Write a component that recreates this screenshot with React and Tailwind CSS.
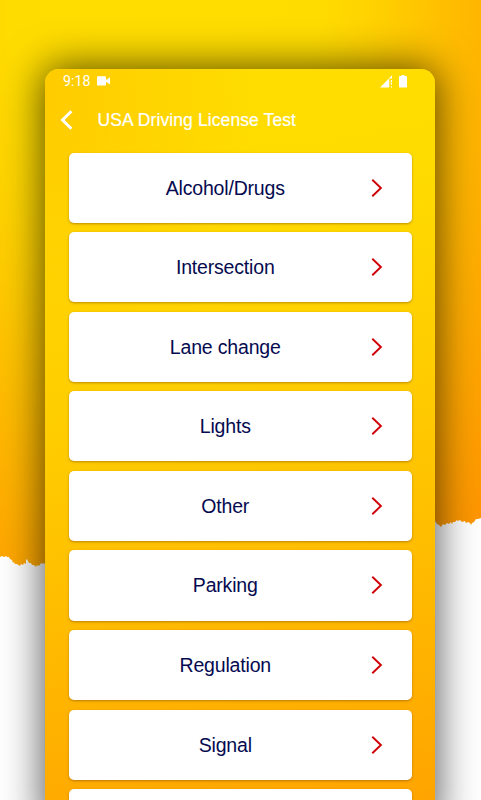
const topics = [
  'Alcohol/Drugs',
  'Intersection',
  'Lane change',
  'Lights',
  'Other',
  'Parking',
  'Regulation',
  'Signal',
  '',
];

function TornBackdrop() {
  return (
    <svg className="absolute inset-0" width="481" height="800" viewBox="0 0 481 800" aria-hidden="true">
      <defs>
        <radialGradient id="backdrop" gradientUnits="userSpaceOnUse" cx="0" cy="0" r="1" gradientTransform="translate(165 0) scale(480 790)">
          <stop offset="0" stopColor="#ffdd00" />
          <stop offset="0.32" stopColor="#ffdc00" />
          <stop offset="0.43" stopColor="#ffd200" />
          <stop offset="0.62" stopColor="#ffba00" />
          <stop offset="0.94" stopColor="#ff9400" />
          <stop offset="1" stopColor="#ff9000" />
        </radialGradient>
      </defs>
      <path
        fill="url(#backdrop)"
        d="M0 0H481V518L478 519L476 519L474 522L472 523L471 525L470 523L468 522L466 523L465 521L462 522L460 520L458 521L457 520L455 522L453 522L452 524L451 522L449 524L447 523L445 525L443 524L441 527L439 525L437 524L435 521V567H45V564L43 563L42 564L41 563L39 566L37 565L36 567L34 565L32 565L31 563L29 563L28 561L27 559L26 560V564L24 563L23 565L21 564L20 566L17 564L15 564L14 562L13 563L12 560L10 559L9 557L7 557L6 556L4 557L2 556L0 557Z"
      />
    </svg>
  );
}

function StatusBar() {
  return (
    <div className="flex h-6 items-center justify-between pl-[18px] pr-7">
      <div className="flex items-center gap-[7px]">
        <span className="font-[Roboto,sans-serif] text-[14.2px] leading-6">9:18</span>
        <svg width="14" height="10" viewBox="0 0 14 10" fill="currentColor" aria-hidden="true">
          <path d="M.7 .3h7.6q.7 0 .7.7v2.9L10.6 3l2.4-1.7v7.2L10.6 6.8 9 5.9v2.9q0 .7-.7.7H.7Q0 9.5 0 8.8V1Q0 .3.7 .3Z" />
        </svg>
      </div>
      <div className="flex items-center gap-[7px]">
        <svg width="12" height="13" viewBox="0 0 12 13" fill="currentColor" aria-hidden="true">
          <path d="M0 12.5 9.2 3.3V12.5ZM8.8 3.5 12 .2V3.5ZM10.8 5h1.2v1.9h-1.2ZM10.8 7.6h1.2v2.2h-1.2ZM10.8 11.2h1.2v1.3h-1.2Z" />
        </svg>
        <svg width="8" height="13" viewBox="0 0 8 13" fill="currentColor" aria-hidden="true">
          <path d="M2.4 0h3.2v1.1h1.6q.8 0 .8.8v9.8q0 .8-.8.8H.8q-.8 0-.8-.8V1.9q0-.8.8-.8h1.6Z" />
        </svg>
      </div>
    </div>
  );
}

function Header() {
  return (
    <header className="flex h-[54px] items-center pl-[15px]">
      <svg width="13" height="20" viewBox="0 0 13 20" fill="none" stroke="currentColor" strokeWidth="2.9" aria-hidden="true">
        <path d="M11.4 1.2 2.5 10l8.9 8.8" />
      </svg>
      <h1 className="ml-[24.5px] whitespace-nowrap text-[17.5px] leading-6 tracking-[0.1px] [-webkit-text-stroke:0.2px_white]">USA Driving License Test</h1>
    </header>
  );
}

function TopicCard({ label }) {
  return (
    <button
      type="button"
      className="flex h-[70.2px] w-full shrink-0 items-center rounded-[5px] bg-white pl-[11px] pr-[29px] text-[#050a50] shadow-[0_1px_2.5px_rgba(90,50,0,0.42)]"
    >
      <span className="flex-1 text-center text-[19.5px] leading-6 tracking-[-0.18px]">{label}</span>
      <svg width="12" height="18" viewBox="0 0 12 18" fill="none" stroke="#d00008" strokeWidth="1.9" aria-hidden="true">
        <path d="M1.3 .8 9.9 9 1.3 17.2" />
      </svg>
    </button>
  );
}

export default function App() {
  return (
    <div className="relative h-[800px] w-[481px] overflow-hidden bg-white font-['Liberation_Sans',Arial,sans-serif]">
      <TornBackdrop />
      <main className="relative ml-[45px] mt-[69px] h-[760px] w-[390px] rounded-t-[14px] bg-[radial-gradient(ellipse_210px_340px_at_0px_20px,rgba(255,200,0,0.85)_0%,rgba(255,200,0,0.5)_40%,rgba(255,200,0,0)_100%),linear-gradient(170deg,#ffdd00_0px,#ffdc00_150px,#ffca00_395px,#ffbb00_560px,#ffa200_810px)] text-white shadow-[0_0_40px_2px_rgba(0,0,0,0.66)]">
        <StatusBar />
        <Header />
        <div className="mt-[5.5px] flex flex-col gap-[9.4px] pl-6 pr-[23.5px]">
          {topics.map((label, i) => (
            <TopicCard key={i} label={label} />
          ))}
        </div>
      </main>
    </div>
  );
}
